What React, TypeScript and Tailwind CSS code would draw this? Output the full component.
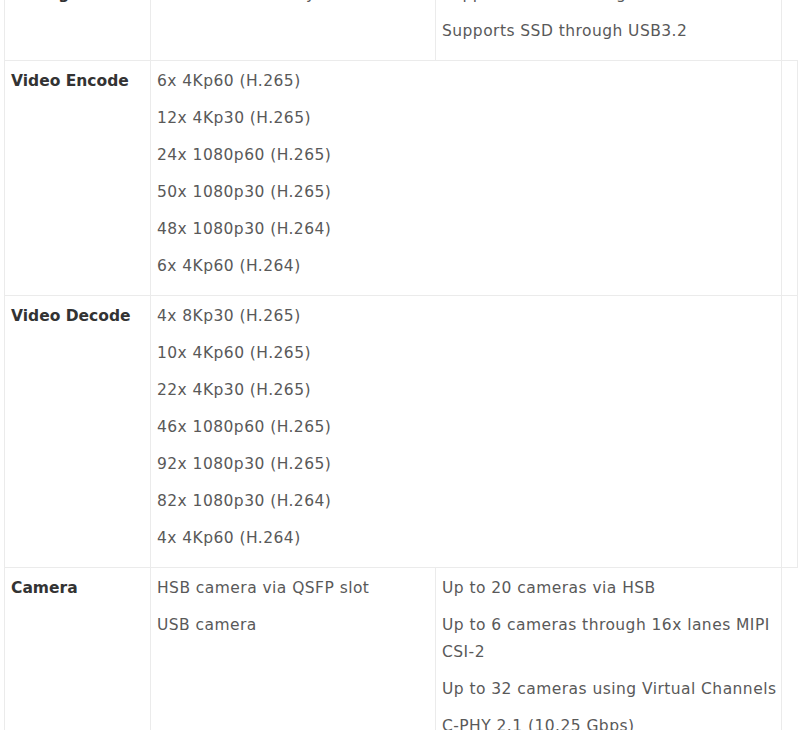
import React from "react";

const td = "border border-[#ebebeb] align-top px-[6px] pt-[7px] pb-[5px]";
const lbl = "border border-[#ebebeb] align-top px-[6px] pt-[7px] pb-[5px] font-bold text-[#333333] tracking-normal";

function Items({ items }: { items: React.ReactNode[] }) {
  return (
    <>
      {items.map((t, i) => (
        <p key={i} className="mb-[10px] whitespace-nowrap">
          {t}
        </p>
      ))}
    </>
  );
}

export default function App() {
  return (
    <div className="bg-white w-[800px] h-[730px] overflow-hidden font-['DejaVu_Sans',sans-serif] text-[15.5px] leading-[27px] text-[#595959] tracking-[0.45px]">
      <div className="pl-[4px] -mt-[27px]">
        <table className="border-collapse table-fixed w-[793px]">
          <colgroup>
            <col className="w-[146px]" />
            <col className="w-[285px]" />
            <col className="w-[346px]" />
            <col className="w-[16px]" />
          </colgroup>
          <tbody>
            <tr>
              <td className={lbl}>
                <p className="mb-[10px]">Storage</p>
              </td>
              <td className={td}>
                <Items items={["1 TB NVMe M.2 Key M slot"]} />
              </td>
              <td className={td}>
                <Items items={["Supports NVMe through PCIe", "Supports SSD through USB3.2"]} />
              </td>
            </tr>
            <tr>
              <td className={lbl}>
                <p className="mb-[10px]">Video Encode</p>
              </td>
              <td className={td} colSpan={2}>
                <Items
                  items={[
                    "6x 4Kp60 (H.265)",
                    "12x 4Kp30 (H.265)",
                    "24x 1080p60 (H.265)",
                    "50x 1080p30 (H.265)",
                    "48x 1080p30 (H.264)",
                    "6x 4Kp60 (H.264)",
                  ]}
                />
              </td>
              <td className={td}></td>
            </tr>
            <tr>
              <td className={lbl}>
                <p className="mb-[10px]">Video Decode</p>
              </td>
              <td className={td} colSpan={2}>
                <Items
                  items={[
                    "4x 8Kp30 (H.265)",
                    "10x 4Kp60 (H.265)",
                    "22x 4Kp30 (H.265)",
                    "46x 1080p60 (H.265)",
                    "92x 1080p30 (H.265)",
                    "82x 1080p30 (H.264)",
                    "4x 4Kp60 (H.264)",
                  ]}
                />
              </td>
              <td className={td}></td>
            </tr>
            <tr>
              <td className={lbl}>
                <p className="mb-[10px]">Camera</p>
              </td>
              <td className={td}>
                <Items items={["HSB camera via QSFP slot", "USB camera"]} />
              </td>
              <td className={td}>
                <Items
                  items={[
                    "Up to 20 cameras via HSB",
                    <>
                      Up to 6 cameras through 16x lanes MIPI
                      <br />
                      CSI-2
                    </>,
                    "Up to 32 cameras using Virtual Channels",
                    "C-PHY 2.1 (10.25 Gbps)",
                    "D-PHY 2.1 (40 Gbps)",
                  ]}
                />
              </td>
            </tr>
          </tbody>
        </table>
      </div>
    </div>
  );
}
